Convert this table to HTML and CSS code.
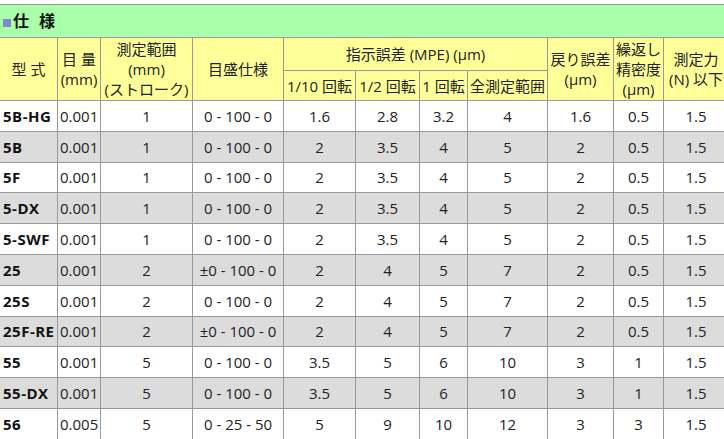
FILE: index.html
```html
<!DOCTYPE html>
<html lang="ja">
<head>
<meta charset="utf-8">
<link rel="stylesheet" href="styles.css">
</head>
<body>
<div class="wrap">
<table class="spec">
  <colgroup>
    <col class="c1"><col class="c2"><col class="c3"><col class="c4"><col class="c5"><col class="c6"><col class="c7"><col class="c8"><col class="c9"><col class="c10"><col class="c11">
  </colgroup>
  <thead>
    <tr class="title-row"><th colspan="11" class="title"><span class="sq"></span><span class="gap">仕</span>様</th></tr>
    <tr class="h1">
      <th rowspan="2">型 式</th>
      <th rowspan="2">目 量<br>(mm)</th>
      <th rowspan="2">測定範囲<br>(mm)<br>(ストローク)</th>
      <th rowspan="2">目盛仕様</th>
      <th colspan="4">指示誤差 (MPE) (µm)</th>
      <th rowspan="2">戻り誤差<br>(µm)</th>
      <th rowspan="2">繰返し<br>精密度<br>(µm)</th>
      <th rowspan="2">測定力<br>(N) 以下</th>
    </tr>
    <tr class="h2">
      <th>1/10 回転</th>
      <th>1/2 回転</th>
      <th>1 回転</th>
      <th>全測定範囲</th>
    </tr>
  </thead>
  <tbody>
    <tr><td class="m">5B-HG</td><td class="l">0.001</td><td>1</td><td>0 - 100 - 0</td><td>1.6</td><td>2.8</td><td>3.2</td><td>4</td><td>1.6</td><td>0.5</td><td>1.5</td></tr>
    <tr class="g"><td class="m">5B</td><td class="l">0.001</td><td>1</td><td>0 - 100 - 0</td><td>2</td><td>3.5</td><td>4</td><td>5</td><td>2</td><td>0.5</td><td>1.5</td></tr>
    <tr><td class="m">5F</td><td class="l">0.001</td><td>1</td><td>0 - 100 - 0</td><td>2</td><td>3.5</td><td>4</td><td>5</td><td>2</td><td>0.5</td><td>1.5</td></tr>
    <tr class="g"><td class="m">5-DX</td><td class="l">0.001</td><td>1</td><td>0 - 100 - 0</td><td>2</td><td>3.5</td><td>4</td><td>5</td><td>2</td><td>0.5</td><td>1.5</td></tr>
    <tr><td class="m">5-SWF</td><td class="l">0.001</td><td>1</td><td>0 - 100 - 0</td><td>2</td><td>3.5</td><td>4</td><td>5</td><td>2</td><td>0.5</td><td>1.5</td></tr>
    <tr class="g"><td class="m">25</td><td class="l">0.001</td><td>2</td><td>±0 - 100 - 0</td><td>2</td><td>4</td><td>5</td><td>7</td><td>2</td><td>0.5</td><td>1.5</td></tr>
    <tr><td class="m">25S</td><td class="l">0.001</td><td>2</td><td>0 - 100 - 0</td><td>2</td><td>4</td><td>5</td><td>7</td><td>2</td><td>0.5</td><td>1.5</td></tr>
    <tr class="g"><td class="m">25F-RE</td><td class="l">0.001</td><td>2</td><td>±0 - 100 - 0</td><td>2</td><td>4</td><td>5</td><td>7</td><td>2</td><td>0.5</td><td>1.5</td></tr>
    <tr><td class="m">55</td><td class="l">0.001</td><td>5</td><td>0 - 100 - 0</td><td>3.5</td><td>5</td><td>6</td><td>10</td><td>3</td><td>1</td><td>1.5</td></tr>
    <tr class="g"><td class="m">55-DX</td><td class="l">0.001</td><td>5</td><td>0 - 100 - 0</td><td>3.5</td><td>5</td><td>6</td><td>10</td><td>3</td><td>1</td><td>1.5</td></tr>
    <tr><td class="m">56</td><td class="l">0.005</td><td>5</td><td>0 - 25 - 50</td><td>5</td><td>9</td><td>10</td><td>12</td><td>3</td><td>3</td><td>1.5</td></tr>
  </tbody>
</table>
</div>
</body>
</html>
```

FILE: styles.css
```css
html, body {
  margin: 0;
  padding: 0;
  background: #fff;
  overflow: hidden;
}
.wrap {
  padding-top: 4px;
  margin-left: -1px;
  width: 740px;
}
.spec {
  border-collapse: collapse;
  table-layout: fixed;
  width: 729px;
  font-family: "Open Sans", "Noto Sans CJK JP", sans-serif;
  font-size: 15px;
  line-height: 20px;
  color: #222;
}
.c1 { width: 58px; }
.c2 { width: 43px; }
.c3 { width: 92px; }
.c4 { width: 91px; }
.c5 { width: 72px; }
.c6 { width: 64px; }
.c7 { width: 48px; }
.c8 { width: 80px; }
.c9 { width: 66px; }
.c10 { width: 50px; }
.c11 { width: 65px; }
.spec th, .spec td {
  border: 1px solid #999;
  padding: 0 1px;
  text-align: center;
  vertical-align: middle;
  white-space: nowrap;
  overflow: hidden;
}
.spec th {
  font-weight: normal;
  background: #ffff99;
}
.title-row { height: 33px; }
.spec th.title {
  background: #aaffaa;
  text-align: left;
  font-weight: bold;
  font-size: 16px;
  padding-left: 3px;
  color: #111;
}
.sq {
  display: inline-block;
  width: 8px;
  height: 8px;
  background: #7a8ccc;
  margin-right: 2px;
  vertical-align: 0;
}
.gap { margin-right: 10px; }
.h1 { height: 33px; }
.h2 { height: 30px; }
.spec tbody tr { height: 30.8px; }
.spec tbody tr.g td { background: #dcdcdc; }
.spec td.m {
  text-align: left;
  font-weight: bold;
  padding-left: 3px;
  letter-spacing: 0.5px;
  color: #111;
}
.spec td.l {
  text-align: left;
  padding-left: 2px;
}
```
